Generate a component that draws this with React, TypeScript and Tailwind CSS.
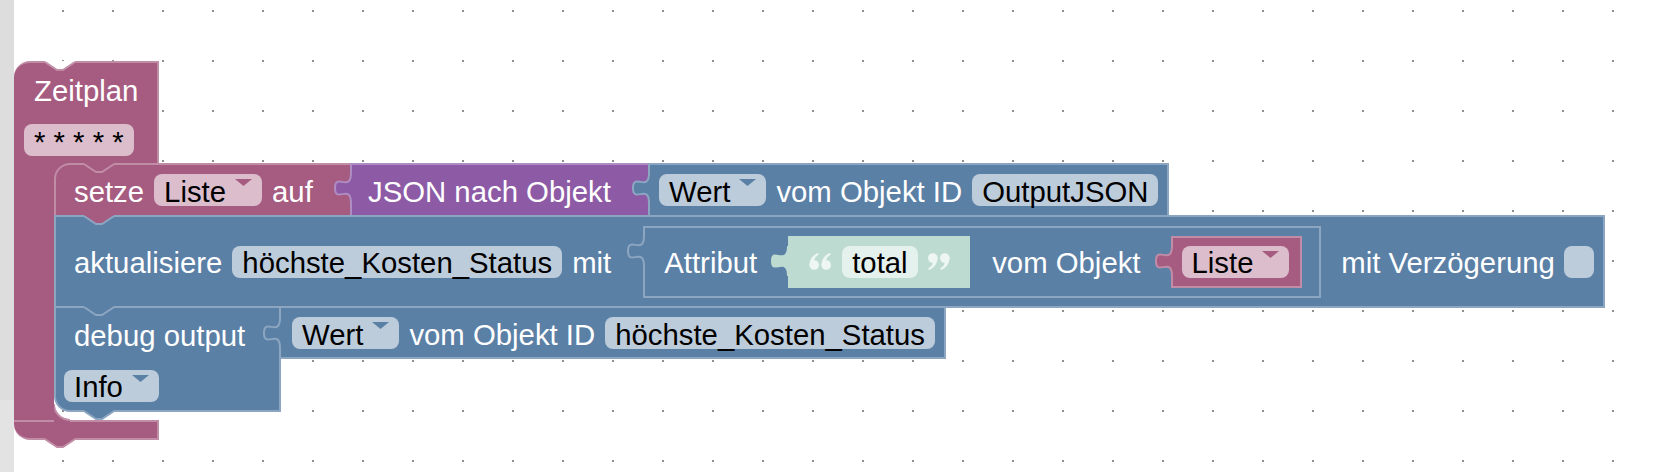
import React from "react";

type V = "blue" | "pink" | "mint";

function T({ children, className = "" }: { children: React.ReactNode; className?: string }) {
  return <span className={"pt-[3px] shrink-0 " + className}>{children}</span>;
}

function Arrow({ fill }: { fill: string }) {
  return (
    <svg width="17" height="7" viewBox="0 0 17 7" className="ml-[9px] mt-[5px] self-start shrink-0">
      <polygon points="0,0 17,0 8.5,7" fill={fill} />
    </svg>
  );
}

function Dropdown({ children, v = "blue", className = "" }: { children: React.ReactNode; v?: V; className?: string }) {
  const bg = v === "pink" ? "bg-[#dbbdcc]" : "bg-[#bdccdb]";
  const arrow = v === "pink" ? "#a65b80" : "#5b80a6";
  return (
    <div className={"flex items-center h-[32px] px-[10px] rounded-[8px] text-black shrink-0 " + bg + " " + className}>
      <T>{children}</T>
      <Arrow fill={arrow} />
    </div>
  );
}

function Field({ children, v = "blue", className = "" }: { children: React.ReactNode; v?: V; className?: string }) {
  const bg = v === "pink" ? "bg-[#dbbdcc]" : v === "mint" ? "bg-[#e5f1ed]" : "bg-[#bdccdb]";
  return (
    <div className={"flex items-center h-[32px] px-[10px] rounded-[8px] text-black shrink-0 " + bg + " " + className}>
      <T>{children}</T>
    </div>
  );
}

function Tab({ fill, stroke, className = "" }: { fill: string; stroke?: string; className?: string }) {
  return (
    <svg width="18" height="30" viewBox="0 0 18 30" className={"absolute left-[-18px] z-10 " + className}>
      <path d="M18,0 L17,0 C17,20 1,-1 1,15 S17,10 17,30 L18,30 Z" fill={fill} />
      {stroke && <path d="M17,0 C17,20 1,-1 1,15 S17,10 17,30" fill="none" stroke={stroke} strokeWidth="2" />}
    </svg>
  );
}

function Notch({ fill, stroke, className = "" }: { fill: string; stroke: string; className?: string }) {
  return (
    <svg width="30" height="10" viewBox="0 0 30 10" className={"absolute z-10 " + className}>
      <polygon points="0,0 30,0 30,1 18,9 12,9 0,1" fill={fill} />
      <polyline points="0,1 12,9 18,9 30,1" fill="none" stroke={stroke} strokeWidth="2" />
    </svg>
  );
}

function QuoteMark() {
  return (
    <g>
      <circle cx="5.2" cy="12" r="4.8" />
      <path d="M0.6,13 C0.2,7 3,2.5 9,0 L9.8,1.6 C6.5,3.5 5,6 5.2,8.5 Z" />
    </g>
  );
}

function Quote({ close = false, className = "" }: { close?: boolean; className?: string }) {
  return (
    <svg width="22" height="17" viewBox="0 0 22 17" className={"shrink-0 " + className}>
      <g fill="#eef6f3" transform={close ? "rotate(180 11 8.5)" : undefined}>
        <QuoteMark />
        <g transform="translate(12 0)">
          <QuoteMark />
        </g>
      </g>
    </svg>
  );
}

function SetzeRow() {
  return (
    <div className="flex h-[52px]">
      <div className="bg-[#a65b80]">
        <div className="relative flex items-center w-[296px] h-[52px] pl-[18px] rounded-tl-[16px] border-t-2 border-l-2 border-[#c18ca6] bg-[#a65b80] text-white">
          <Notch fill="#a65b80" stroke="#c18ca6" className="left-[28px] top-[-2px]" />
          <T>setze</T>
          <Dropdown v="pink" className="ml-[10px]">Liste</Dropdown>
          <T className="ml-[10px]">auf</T>
          <Notch fill="#a65b80" stroke="#8ca6c1" className="left-[28px] top-full" />
        </div>
      </div>
      <div className="relative flex items-center w-[298px] h-[52px] pl-[16px] border-t-2 border-l-2 border-[#af8cc1] bg-[#8d5ba6] text-white">
        <Tab fill="#8d5ba6" stroke="#af8cc1" className="top-[8px]" />
        <T>JSON nach Objekt</T>
      </div>
      <div className="relative flex items-center w-[521px] h-[52px] pl-[9px] border-t-2 border-l-2 border-r-2 border-[#8ca6c1] bg-[#5b80a6] text-white">
        <Tab fill="#5b80a6" stroke="#8ca6c1" className="top-[8px]" />
        <Dropdown>Wert</Dropdown>
        <T className="ml-[10px]">vom Objekt ID</T>
        <Field className="ml-[10px]">OutputJSON</Field>
      </div>
    </div>
  );
}

function MintText({ className = "" }: { className?: string }) {
  return (
    <div className={"relative flex items-center w-[182px] h-[52px] pl-[21px] bg-[#bddbd1] shrink-0 " + className}>
      <Tab fill="#bddbd1" className="top-[10px]" />
      <Quote className="self-start mt-[17px]" />
      <Field v="mint" className="ml-[11px]">total</Field>
      <Quote close className="ml-[10px] self-start mt-[17px]" />
    </div>
  );
}

function ListeBlock({ className = "" }: { className?: string }) {
  return (
    <div className={"relative flex items-center w-[131px] h-[52px] pl-[9px] border-2 border-[#c18ca6] bg-[#a65b80] shrink-0 " + className}>
      <Tab fill="#a65b80" stroke="#c18ca6" className="top-[8px]" />
      <Dropdown v="pink">Liste</Dropdown>
    </div>
  );
}

function Attribut({ className = "" }: { className?: string }) {
  return (
    <div className={"relative flex items-center w-[678px] h-[72px] pl-[19px] border-2 border-[#8ca6c1] bg-[#5b80a6] shrink-0 " + className}>
      <Tab fill="#5b80a6" stroke="#8ca6c1" className="top-[8px]" />
      <T>Attribut</T>
      <MintText className="ml-[31px]" />
      <T className="ml-[22px]">vom Objekt</T>
      <ListeBlock className="ml-[30px]" />
    </div>
  );
}

function Aktualisiere() {
  return (
    <div className="relative flex items-center w-[1551px] h-[93px] pl-[18px] border-2 border-[#8ca6c1] bg-[#5b80a6] text-white">
      <T>aktualisiere</T>
      <Field className="ml-[10px]">höchste_Kosten_Status</Field>
      <T className="ml-[10px]">mit</T>
      <Attribut className="ml-[32px]" />
      <T className="ml-[20px]">mit Verzögerung</T>
      <div className="ml-[9px] w-[30px] h-[32px] rounded-[8px] bg-[#bdccdb] shrink-0" />
      <Notch fill="#5b80a6" stroke="#8ca6c1" className="left-[28px] top-full" />
    </div>
  );
}

function DebugRow() {
  return (
    <div className="flex items-start">
      <div className="relative flex flex-col w-[227px] h-[104px] rounded-bl-[16px] border-l-2 border-r-2 border-b-2 border-[#8ca6c1] bg-[#5b80a6] text-white">
        <div className="flex items-center h-[53px] pl-[18px]">
          <T>debug output</T>
        </div>
        <div className="flex items-center flex-1 pl-[8px]">
          <Dropdown>Info</Dropdown>
        </div>
        <Notch fill="#5b80a6" stroke="#8ca6c1" className="left-[28px] top-full" />
      </div>
      <div className="relative flex items-center w-[665px] h-[51px] pl-[11px] pt-[1px] border-r-2 border-b-2 border-[#8ca6c1] bg-[#5b80a6] text-white">
        <Tab fill="#5b80a6" stroke="#8ca6c1" className="top-[10px]" />
        <Dropdown>Wert</Dropdown>
        <T className="ml-[10px]">vom Objekt ID</T>
        <Field className="ml-[10px]">höchste_Kosten_Status</Field>
      </div>
    </div>
  );
}

function Zeitplan() {
  return (
    <div className="absolute left-0 top-[61px] flex flex-col items-start">
      <div className="relative flex flex-col w-[145px] h-[102px] rounded-tl-[16px] border-t-2 border-r-2 border-[#c18ca6] bg-[#a65b80]">
        <Notch fill="#ffffff" stroke="#c18ca6" className="left-[31px] top-[-2px]" />
        <div className="flex items-center h-[52px] pl-[20px] text-white">
          <T>Zeitplan</T>
        </div>
        <div className="flex ml-[10px] mt-[9px]">
          <Field v="pink">* * * * *</Field>
        </div>
      </div>
      <div className="flex">
        <div className="w-[40px] shrink-0 bg-[#a65b80]" />
        <div className="flex flex-col items-start">
          <SetzeRow />
          <Aktualisiere />
          <DebugRow />
          <div className="h-[8px]" />
        </div>
      </div>
      <div className="relative w-[145px] h-[20px] rounded-bl-[16px] border-t-2 border-r-2 border-b-2 border-[#c18ca6] bg-[#a65b80]">
        <svg width="16" height="18" viewBox="0 0 16 18" className="absolute left-[40px] top-[-18px] z-10">
          <path d="M0,0 A16,16 0 0 0 16,16 L16,18 L0,18 Z" fill="#a65b80" />
          <path d="M0,0 A16,16 0 0 0 16,16" fill="none" stroke="#c18ca6" strokeWidth="2" />
        </svg>
        <Notch fill="#a65b80" stroke="#c18ca6" className="left-[31px] top-full" />
      </div>
    </div>
  );
}

export default function App() {
  return (
    <div className="relative flex w-[1656px] h-[472px] overflow-hidden bg-white font-['Liberation_Sans',Arial,sans-serif] text-[29.33px] leading-none">
      <div className="flex flex-col w-[14px] h-full shrink-0">
        <div className="h-[400px] bg-[#dddddd]" />
        <div className="flex-1 bg-[#e3e3e3]" />
      </div>
      <div className="relative flex-1 h-full">
        <svg className="absolute inset-0" width="1642" height="472">
          <defs>
            <pattern id="grid" x="-2" y="10" width="50" height="50" patternUnits="userSpaceOnUse">
              <rect x="0" y="0" width="2" height="2" fill="#8f8f8f" />
            </pattern>
          </defs>
          <rect x="0" y="0" width="1642" height="472" fill="url(#grid)" />
        </svg>
        <Zeitplan />
      </div>
    </div>
  );
}
